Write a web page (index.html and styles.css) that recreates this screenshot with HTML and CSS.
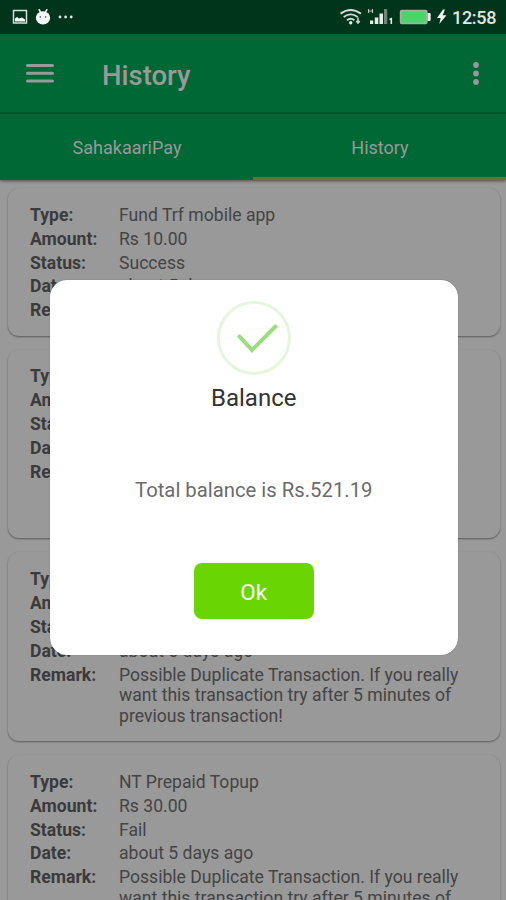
FILE: index.html
```html
<!DOCTYPE html>
<html lang="en">
<head>
<meta charset="utf-8">
<title>History</title>
<link rel="stylesheet" href="styles.css">
</head>
<body>
<div class="screen">
  <div class="status">
    <div class="status-left">
      <svg width="16" height="16" viewBox="0 0 16 16"><rect x="1.5" y="1.500" width="13" height="12.500" fill="none" stroke="#d8ded9" stroke-width="1.500"/><path d="M3 12.500V9.500l2-1.500L7 9.500l3-1 3 2v2z" fill="#fff"/></svg>
      <svg width="16" height="16" viewBox="0 0 16 16"><path d="M4.200.8l1.400 2.400M11.800.8l-1.400 2.400" stroke="#f5f7f5" stroke-width="1.600" stroke-linecap="round"/><ellipse cx="8" cy="8.800" rx="7.200" ry="6.600" fill="#f5f7f5"/><circle cx="5.300" cy="8" r=".7" fill="#00341b"/><circle cx="10.700" cy="8" r=".7" fill="#00341b"/></svg>
      <svg width="16" height="16" viewBox="0 0 16 16" fill="#dfe5e0"><circle cx="2" cy="8" r="1.400"/><circle cx="7.600" cy="8" r="1.400"/><circle cx="13.200" cy="8" r="1.400"/></svg>
    </div>
    <div class="status-right">
      <svg width="153" height="20" viewBox="342 8 153 20">
        <g fill="none" stroke="#d3dbd5" stroke-width="1.900"><path d="M340.500 14.600q10.200-7.200 20.400 0"/><path d="M343.700 18q7-5.200 14 0"/><path d="M347 21.200q3.700-2.800 7.400 0"/></g>
        <circle cx="350.700" cy="23.700" r="1.700" fill="#e8ece9"/><path d="M358 18.500v5.500M356.300 22l1.700 2 1.700-2" stroke="#d3dbd5" stroke-width="1.500" fill="none"/>
        <path d="M368.500 10v4M372.500 10v4M368.500 12h4" stroke="#bec9c1" stroke-width="1.100" fill="none"/>
        <g fill="#e9edea"><path d="M370 21.500h3.200V25H370zM374.800 18.500h3.500V25h-3.500zM379.500 14.500h3.500V25h-3.500z"/></g>
        <path d="M384 10h3.200v15H384z" fill="#6f8778"/><path d="M389.500 20.500l1.800-.8V25" stroke="#e3e9e5" stroke-width="1.600" fill="none"/>
        <rect x="400.700" y="11.700" width="26" height="12.600" rx="1" fill="#49d667" stroke="#a3b0a6" stroke-width="1.800"/><path d="M427.500 14h2.200q1 0 1 1v6q0 1-1 1h-2.200z" fill="#e4e9e5"/>
        <path d="M443 10.500l-6 8.500h3.600l-1.300 6 7.200-8.700h-3.800l2.300-5.800z" fill="#eff2ef"/>
      </svg>
      <span class="clock">12:58</span>
    </div>
  </div>
  <header class="appbar">
    <svg class="menu" width="28" height="20" viewBox="0 0 28 20"><path d="M1.500 2.500h25M1.500 10.300h25M1.500 18.100h25" stroke="#999" stroke-width="3" stroke-linecap="round"/></svg>
    <h1>History</h1>
    <svg class="more" width="8" height="24" viewBox="0 0 8 24" fill="#999"><circle cx="4" cy="4" r="2.900"/><circle cx="4" cy="12.500" r="2.900"/><circle cx="4" cy="21" r="2.900"/></svg>
  </header>
  <nav class="tabs"><span class="tab">SahakaariPay</span><span class="tab active">History</span></nav>
  <main class="list">
    <dl class="card">
      <dt>Type:</dt><dd>Fund Trf mobile app</dd>
      <dt>Amount:</dt><dd>Rs 10.00</dd>
      <dt>Status:</dt><dd>Success</dd>
      <dt>Date:</dt><dd>about 5 days ago</dd>
      <dt>Remark:</dt><dd></dd>
    </dl>
    <dl class="card">
      <dt>Type:</dt><dd>NT Prepaid Topup</dd>
      <dt>Amount:</dt><dd>Rs 30.00</dd>
      <dt>Status:</dt><dd>Fail</dd>
      <dt>Date:</dt><dd>about 5 days ago</dd>
      <dt>Remark:</dt><dd>Possible Duplicate Transaction. If you really<br>want this transaction try after 5 minutes of<br>previous transaction!</dd>
    </dl>
    <dl class="card">
      <dt>Type:</dt><dd>NT Prepaid Topup</dd>
      <dt>Amount:</dt><dd>Rs 30.00</dd>
      <dt>Status:</dt><dd>Fail</dd>
      <dt>Date:</dt><dd>about 5 days ago</dd>
      <dt>Remark:</dt><dd>Possible Duplicate Transaction. If you really<br>want this transaction try after 5 minutes of<br>previous transaction!</dd>
    </dl>
    <dl class="card">
      <dt>Type:</dt><dd>NT Prepaid Topup</dd>
      <dt>Amount:</dt><dd>Rs 30.00</dd>
      <dt>Status:</dt><dd>Fail</dd>
      <dt>Date:</dt><dd>about 5 days ago</dd>
      <dt>Remark:</dt><dd>Possible Duplicate Transaction. If you really<br>want this transaction try after 5 minutes of<br>previous transaction!</dd>
    </dl>
  </main>
  <section class="dialog" role="dialog">
    <svg class="check" width="76" height="76" viewBox="0 0 76 76" fill="none"><circle cx="38" cy="38" r="35.500" stroke="#e5f6dc" stroke-width="3"/><path d="M23.500 36.500L36 50 59.500 26.500" stroke="#9bdc7c" stroke-width="4" stroke-linecap="round"/></svg>
    <h2>Balance</h2>
    <p>Total balance is Rs.521.19</p>
    <button>Ok</button>
  </section>
</div>
</body>
</html>
```
FILE: styles.css
```css
* { box-sizing: border-box; }
body { margin: 0; font-family: Roboto, "Liberation Sans", sans-serif; }
h1, h2, p, dl, dd { margin: 0; }
svg { display: block; flex: none; }
.screen { position: relative; width: 506px; height: 900px; overflow: hidden; background: #999; display: flex; flex-direction: column; }
.status { flex: none; height: 34px; background: #00341b; display: flex; justify-content: space-between; align-items: center; padding: 0 10px 0 12px; }
.status-left { display: flex; gap: 7px; }
.status-right { display: flex; align-items: center; width: 154px; }
.status-right svg { overflow: visible; margin-right: -43px; }
.clock { color: #e2e7e3; font-size: 18px; line-height: 34px; font-weight: 500; letter-spacing: -.3px; padding-top: 2px; }
.appbar { flex: none; height: 80px; background: #006835; border-bottom: 2px solid #00592d; display: flex; align-items: center; padding: 0 26px; }
h1 { margin-left: 48px; flex: 1; color: #999; font-size: 27.500px; font-weight: 500; padding-top: 4px; }
.tabs { flex: none; height: 66px; background: #006835; display: flex; box-shadow: 0 1px 3px rgba(0,0,0,.5); }
.tab { flex: 1; display: flex; justify-content: center; align-items: center; color: #999; font-size: 18px; border-bottom: 3px solid transparent; padding: 4px 0 0 1px; }
.active { border-color: #617720; }
.list { display: flex; flex-direction: column; gap: 14px; padding: 8px 6px 0 8px; }
.card { flex: none; display: grid; grid-template-columns: 89px 1fr; row-gap: 3.400px; padding: 16.800px 0 14.800px 22px; border-radius: 11px; background: #999; box-shadow: 0 1px 2px rgba(0,0,0,.42); font-size: 17.600px; line-height: 20.500px; color: #444; }
dt { font-weight: 700; color: #3b3b3b; }
dd { white-space: nowrap; }
.dialog { position: absolute; left: 50px; top: 280px; width: 407.500px; height: 374.500px; background: #fff; border-radius: 17px; display: flex; flex-direction: column; align-items: center; padding-top: 20px; box-shadow: 0 0 1px rgba(0,0,0,.5); }
h2 { margin-top: 7px; font-size: 24px; line-height: 30px; font-weight: 400; color: #333; }
.dialog p { margin-top: 64px; font-size: 20.300px; line-height: 26px; color: #6b6b6b; }
.dialog button { margin-top: 60px; width: 120px; height: 56px; border: 0; border-radius: 8px; background: #69d503; color: #fff; font: 400 22.500px Roboto, sans-serif; padding: 2px 0 0; }
```
